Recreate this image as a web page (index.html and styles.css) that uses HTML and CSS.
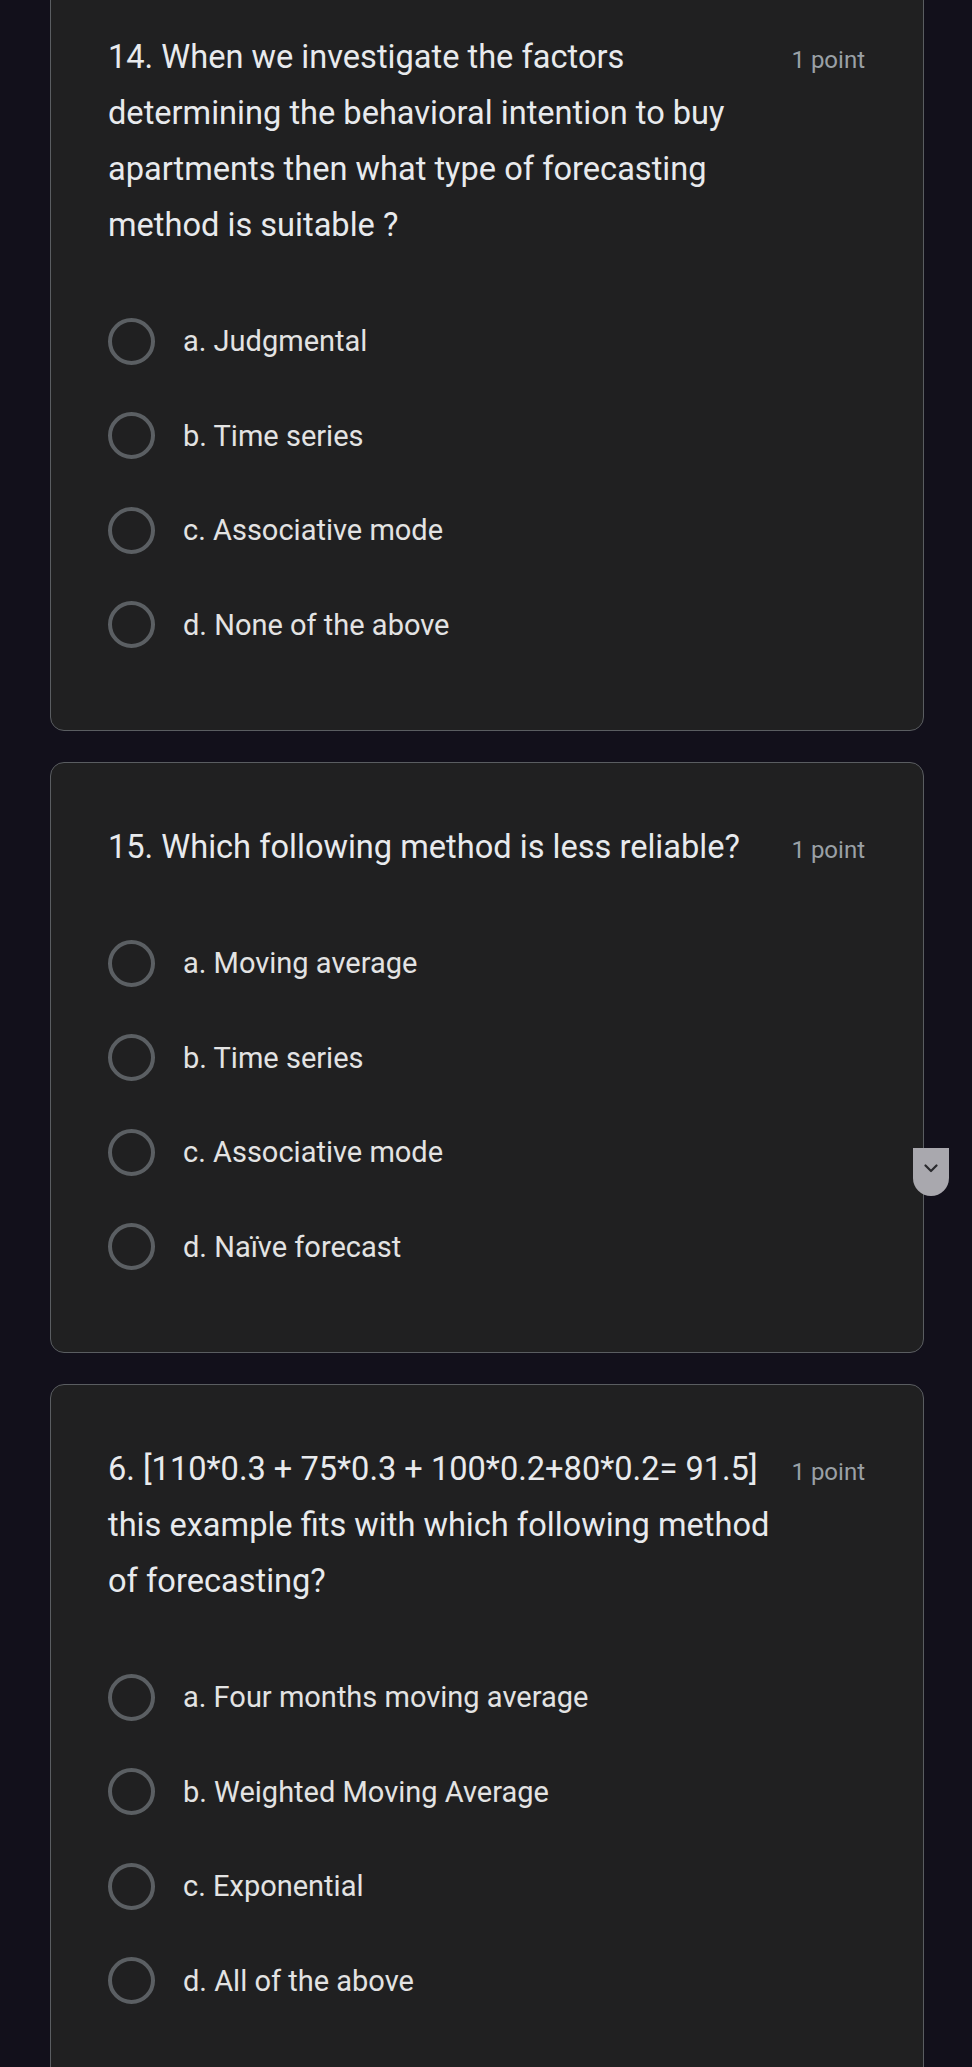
FILE: index.html
```html
<!DOCTYPE html>
<html lang="en">
<head>
<meta charset="utf-8">
<title>Quiz</title>
<link rel="stylesheet" href="styles.css">
</head>
<body>
<main class="page">
  <section class="card">
    <div class="head">
      <div class="question">14. When we investigate the factors determining the behavioral intention to buy apartments then what type of forecasting method is suitable ?</div>
      <div class="points">1 point</div>
    </div>
    <ul class="options">
      <li class="option"><span class="radio"></span><span class="label">a. Judgmental</span></li>
      <li class="option"><span class="radio"></span><span class="label">b. Time series</span></li>
      <li class="option"><span class="radio"></span><span class="label">c. Associative mode</span></li>
      <li class="option"><span class="radio"></span><span class="label">d. None of the above</span></li>
    </ul>
  </section>
  <section class="card">
    <div class="head">
      <div class="question">15. Which following method is less reliable?</div>
      <div class="points">1 point</div>
    </div>
    <ul class="options">
      <li class="option"><span class="radio"></span><span class="label">a. Moving average</span></li>
      <li class="option"><span class="radio"></span><span class="label">b. Time series</span></li>
      <li class="option"><span class="radio"></span><span class="label">c. Associative mode</span></li>
      <li class="option"><span class="radio"></span><span class="label">d. Naïve forecast</span></li>
    </ul>
  </section>
  <section class="card">
    <div class="head">
      <div class="question">6. [110*0.3 + 75*0.3 + 100*0.2+80*0.2= 91.5] this example fits with which following method of forecasting?</div>
      <div class="points">1 point</div>
    </div>
    <ul class="options">
      <li class="option"><span class="radio"></span><span class="label">a. Four months moving average</span></li>
      <li class="option"><span class="radio"></span><span class="label">b. Weighted Moving Average</span></li>
      <li class="option"><span class="radio"></span><span class="label">c. Exponential</span></li>
      <li class="option"><span class="radio"></span><span class="label">d. All of the above</span></li>
    </ul>
  </section>
</main>
<button class="scroll-btn" aria-label="Scroll down">
  <svg width="14" height="9" viewBox="0 0 14 9"><path d="M1.5 1.5 L7 7 L12.5 1.5" fill="none" stroke="#2a2a2e" stroke-width="2.2" stroke-linecap="round" stroke-linejoin="round"/></svg>
</button>
</body>
</html>
```

FILE: styles.css
```css
html, body {
  margin: 0;
  padding: 0;
  background: #12101b;
  overflow: hidden;
}

body {
  height: 2067px;
  position: relative;
  font-family: Roboto, "Liberation Sans", sans-serif;
}

.page {
  display: flex;
  flex-direction: column;
  gap: 31px;
  padding: 0 48px 0 50px;
  margin-top: -28px;
}

.card {
  background: #202021;
  border: 1px solid #5a5d61;
  border-radius: 14px;
  padding: 56px 58px 58px 57px;
}

.head {
  display: flex;
  align-items: baseline;
  justify-content: space-between;
  gap: 8px;
}

.question {
  flex: 1;
  font-size: 32.6px;
  line-height: 56px;
  color: #e8eaed;
}

.points {
  font-size: 24px;
  color: #9aa0a6;
  white-space: nowrap;
}

.options {
  list-style: none;
  margin: 41px 0 0 0;
  padding: 0;
}

.option {
  height: 94.5px;
  display: flex;
  align-items: center;
}

.radio {
  width: 47px;
  height: 47px;
  box-sizing: border-box;
  border: 4px solid #5b5f63;
  border-radius: 50%;
  margin-right: 28px;
  flex: none;
}

.label {
  font-size: 29px;
  color: #e3e3e3;
}

.scroll-btn {
  position: absolute;
  left: 913px;
  top: 1148px;
  width: 36px;
  height: 48px;
  border: none;
  padding: 0;
  background: #a9a8ae;
  border-radius: 0 0 18px 18px;
  display: flex;
  align-items: center;
  justify-content: center;
  padding-bottom: 8px;
}
```
